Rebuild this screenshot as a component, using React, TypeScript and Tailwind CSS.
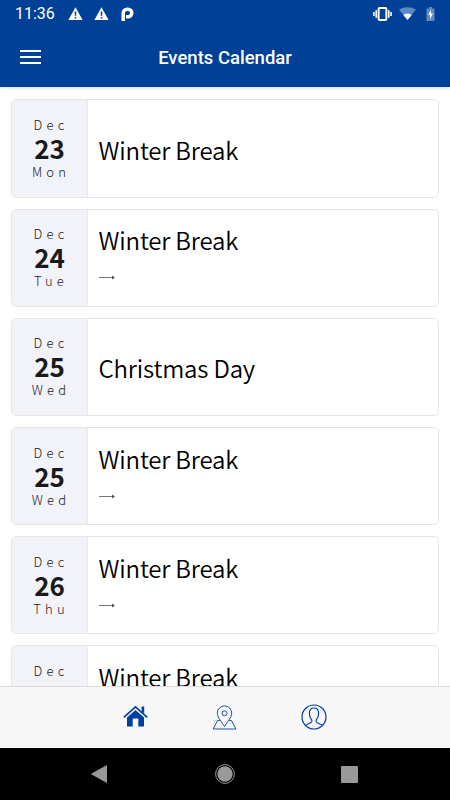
type EventItem = {
    month: string
    day: string
    weekday: string
    title: string
    hasRange?: boolean
}

const events: EventItem[] = [
    { month: 'Dec', day: '23', weekday: 'Mon', title: 'Winter Break' },
    { month: 'Dec', day: '24', weekday: 'Tue', title: 'Winter Break', hasRange: true },
    { month: 'Dec', day: '25', weekday: 'Wed', title: 'Christmas Day' },
    { month: 'Dec', day: '25', weekday: 'Wed', title: 'Winter Break', hasRange: true },
    { month: 'Dec', day: '26', weekday: 'Thu', title: 'Winter Break', hasRange: true },
    { month: 'Dec', day: '27', weekday: 'Fri', title: 'Winter Break', hasRange: true },
]

function WarningIcon() {
    return (
        <svg width="15" height="14" viewBox="0 0 15 14">
            <path d="M7.5 0.3 14.6 13H0.4z" fill="#fff" />
            <path d="M7.5 4.6v4.2M7.5 10v1.6" stroke="#004197" strokeWidth="1.5" />
        </svg>
    )
}

function StatusBar() {
    return (
        <div className="flex h-[27px] items-center justify-between pl-[15px] pr-[15px] text-white">
            <div className="flex items-center">
                <span className="w-[53px] text-[16px] leading-[27px]">11:36</span>
                <WarningIcon />
                <span className="w-[11px]" />
                <WarningIcon />
                <svg className="ml-[12px]" width="13" height="14" viewBox="0 0 13 14">
                    <path
                        d="M2.2 14V6.100A4 4 0 0 1 6.200 2.200H7A3.800 3.800 0 0 1 7 9.800H5"
                        fill="none"
                        stroke="#fff"
                        strokeWidth="3.500"
                    />
                </svg>
            </div>
            <div className="flex items-center">
                <svg width="19" height="14" viewBox="0 0 19 14">
                    <rect x="5.6" y="1.1" width="7.8" height="11.8" rx="1" fill="none" stroke="#fff" strokeWidth="2" />
                    <path d="M3.2 3.2v7.6M15.8 3.2v7.6M0.9 5v4M18.1 5v4" stroke="#fff" strokeWidth="1.6" />
                </svg>
                <svg className="ml-[7px]" width="17" height="13" viewBox="0 0 17 13">
                    <path d="M0 2.6C5-.7 12-.7 17 2.6L8.5 13z" fill="#6089c0" />
                    <path d="M4.3 8C6.5 6.4 10.5 6.4 12.7 8L8.5 13z" fill="#fff" />
                </svg>
                <svg className="ml-[10px]" width="9" height="14" viewBox="0 0 9 14">
                    <path d="M3 0h3v1.4h2.5V14H.5V1.4H3z" fill="#6089c0" />
                    <path d="M5 3 2 8h2v4l3-5.4H5z" fill="#fff" />
                </svg>
            </div>
        </div>
    )
}

function Header() {
    return (
        <header className="h-[87px] shrink-0 bg-[#004197] shadow-[0_1px_3px_rgba(0,0,0,0.15)]">
            <StatusBar />
            <div className="grid h-[60px] grid-cols-[60px_1fr_60px] items-center text-white">
                <button className="ml-[20px] flex w-[21px] flex-col gap-[4px]">
                    <span className="h-[2px] w-full bg-white" />
                    <span className="h-[2px] w-full bg-white" />
                    <span className="h-[2px] w-full bg-white" />
                </button>
                <h1 className="pt-[2px] text-center text-[18.5px] font-medium leading-6">Events Calendar</h1>
            </div>
        </header>
    )
}

function EventCard({ event }: { event: EventItem }) {
    return (
        <div className="flex h-[98.2px] shrink-0 overflow-hidden rounded-[5px] border border-[#e6e6e6] bg-white font-['Noto_Sans_CJK_SC','Noto_Sans',sans-serif]">
            <div className="flex w-[76px] shrink-0 flex-col items-center justify-center border-r border-[#e9e9ea] bg-[#f2f3f8] text-[#1a1a1a]">
                <span className="pl-[3px] text-[13px] font-light leading-[20px] tracking-[4.2px]">{event.month}</span>
                <span className="-mt-px mb-px text-[26px] font-bold leading-[27px]">{event.day}</span>
                <span className="pl-[3px] text-[13px] font-light leading-[20px] tracking-[4.2px]">{event.weekday}</span>
            </div>
            <div className="flex flex-col justify-center pl-[10.5px] font-[350] text-black">
                <p className={event.hasRange ? 'text-[24px] leading-[36px] tracking-[-0.17px]' : 'pt-[3px] text-[24px] leading-[36px] tracking-[-0.17px]'}>
                    {event.title}
                </p>
                {event.hasRange && (
                    <svg className="mt-[13px] mb-[4px]" width="17" height="18" viewBox="0 0 17 18">
                        <path d="M0 6.500h14" stroke="#777" />
                        <path d="M13 4.500 16 6.500 13 8.500z" fill="#555" />
                    </svg>
                )}
            </div>
        </div>
    )
}

function TabBar() {
    return (
        <nav className="flex h-[62px] shrink-0 items-center justify-center gap-[63px] border-t border-[#dadada] bg-[#f7f7f7] pb-[2px] text-[#003f9f]">
            <svg width="26" height="26" viewBox="0 0 26 26">
                <path d="M4 13.500 12.500 6l8.500 7.500v9h-5.700v-8H9.700v8H4z" fill="currentColor" />
                <path d="M.8 13.300 12.500 2.900l11.700 10.400" fill="none" stroke="currentColor" strokeWidth="1.700" />
                <path d="M18.600 2.500h2.600v7l-2.600-2.300z" fill="currentColor" />
            </svg>
            <svg width="26" height="26" viewBox="0 0 26 26" fill="none" stroke="currentColor" strokeWidth="0.9">
                <path d="M12.500 22.500C10 18.500 5.300 13.300 5.300 9.100a7.200 7.200 0 0 1 14.400 0c0 4.200-4.700 9.400-7.200 13.400z" />
                <circle cx="12.500" cy="9.300" r="2.500" />
                <path d="M7.700 16.500H5.500L1.200 25H23.900L19.500 16.500h-2.200" />
            </svg>
            <svg width="26" height="26" viewBox="0 0 26 26" fill="none" stroke="currentColor" strokeWidth="1.200">
                <circle cx="13" cy="13" r="12" />
                <path d="M4.500 21.300c1.700-1.600 5.800-1.900 6.300-3.600.2-.9 0-1.700-.4-2.300-1.300-1.500-2-3.700-2-6.200 0-3.400 1.700-5.200 4.600-5.200s4.600 1.800 4.600 5.200c0 2.500-.7 4.700-2 6.200-.4.600-.6 1.400-.4 2.300.5 1.700 4.600 2 6.300 3.600" />
            </svg>
        </nav>
    )
}

function SystemNav() {
    return (
        <div className="flex h-[52px] shrink-0 items-center justify-between bg-black pl-[91px] pr-[92px]">
            <svg width="16" height="18" viewBox="0 0 16 18">
                <path d="M15.500 .7v16.600L.700 9z" fill="#999" stroke="#999" strokeLinejoin="round" />
            </svg>
            <svg className="ml-[1px]" width="20" height="20" viewBox="0 0 20 20">
                <circle cx="10" cy="10" r="9.400" fill="none" stroke="#999" />
                <circle cx="10" cy="10" r="7.700" fill="#999" />
            </svg>
            <span className="h-[17px] w-[17px] rounded-[1px] bg-[#999]" />
        </div>
    )
}

export default function App() {
    return (
        <div className="flex h-[800px] w-[450px] flex-col overflow-hidden bg-white font-[Roboto,sans-serif]">
            <Header />
            <main className="flex min-h-0 flex-1 flex-col gap-[11px] overflow-hidden px-[11px] pt-[12.400px]">
                {events.map((event, i) => (
                    <EventCard key={i} event={event} />
                ))}
            </main>
            <TabBar />
            <SystemNav />
        </div>
    )
}
